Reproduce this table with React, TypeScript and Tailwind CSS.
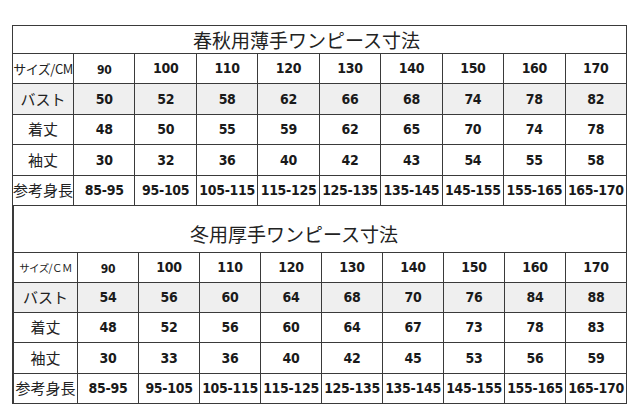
import React from "react";

type Table = {
  title: string;
  titleClass: string;
  sizeLabel: string;
  sizeLabelClass: string;
  labelWidth: string;
  rowHeights: string[];
  rows: { label: string; values: string[]; shaded?: boolean }[];
};

const sizes = ["90", "100", "110", "120", "130", "140", "150", "160", "170"];

const tables: Table[] = [
  {
    title: "春秋用薄手ワンピース寸法",
    titleClass: "h-[28px] pr-[26px] text-[19px] leading-none",
    sizeLabel: "サイズ/CM",
    sizeLabelClass: "text-[13px] tracking-[-0.5px]",
    labelWidth: "grid-cols-[61px_repeat(9,minmax(0,1fr))]",
    rowHeights: ["h-[30px]", "h-[31px]", "h-[30px]", "h-[31px]", "h-[30px]"],
    rows: [
      { label: "バスト", values: ["50", "52", "58", "62", "66", "68", "74", "78", "82"], shaded: true },
      { label: "着丈", values: ["48", "50", "55", "59", "62", "65", "70", "74", "78"] },
      { label: "袖丈", values: ["30", "32", "36", "40", "42", "43", "54", "55", "58"] },
      {
        label: "参考身長",
        values: ["85-95", "95-105", "105-115", "115-125", "125-135", "135-145", "145-155", "155-165", "165-170"],
      },
    ],
  },
  {
    title: "冬用厚手ワンピース寸法",
    titleClass: "h-[47px] pr-[52px] pt-[8px] text-[19px] leading-none",
    sizeLabel: "サイズ/ＣＭ",
    sizeLabelClass: "text-[10.5px] tracking-[-0.6px]",
    labelWidth: "grid-cols-[64px_repeat(9,minmax(0,1fr))]",
    rowHeights: ["h-[30px]", "h-[30px]", "h-[30px]", "h-[31px]", "h-[30px]"],
    rows: [
      { label: "バスト", values: ["54", "56", "60", "64", "68", "70", "76", "84", "88"], shaded: true },
      { label: "着丈", values: ["48", "52", "56", "60", "64", "67", "73", "78", "83"] },
      { label: "袖丈", values: ["30", "33", "36", "40", "42", "45", "53", "56", "59"] },
      {
        label: "参考身長",
        values: ["85-95", "95-105", "105-115", "115-125", "125-135", "135-145", "145-155", "155-165", "165-170"],
      },
    ],
  },
];

const jp = "font-['Noto_Sans_CJK_JP',sans-serif]";
const num = "font-['DejaVu_Sans_Condensed','DejaVu_Sans','Liberation_Sans',sans-serif] font-bold tracking-[-0.3px]";

const SizeTable = ({ table, first }: { table: Table; first: boolean }) => {
  return (
    <div className={`w-[615px] border-l border-[#3a3a3a] ${first ? "border-t" : "border-l-2"}`}>
      <div
        className={`flex items-center justify-center border-r border-b border-[#3a3a3a] text-[#222] ${jp} ${table.titleClass}`}
      >
        {table.title}
      </div>
      <div className={`grid ${table.labelWidth}`}>
        <div
          className={`flex items-center justify-center border-r border-b border-[#3a3a3a] text-[#222] ${jp} ${table.sizeLabelClass} ${table.rowHeights[0]} whitespace-nowrap`}
        >
          {table.sizeLabel}
        </div>
        {sizes.map((s, i) => (
          <div
            key={s}
            className={`flex items-center justify-center border-r border-b border-[#3a3a3a] text-[#1a1a1a] ${num} ${table.rowHeights[0]} ${i === 0 ? "text-[12px] pt-[2px]" : "text-[14px]"}`}
          >
            {s}
          </div>
        ))}
        {table.rows.map((row, r) => (
          <React.Fragment key={row.label}>
            <div
              className={`flex items-center justify-center border-r border-b border-[#3a3a3a] text-[#222] ${jp} text-[15px] ${table.rowHeights[r + 1]} whitespace-nowrap ${row.shaded ? "bg-[#efefef]" : "bg-white"}`}
            >
              {row.label}
            </div>
            {row.values.map((v, i) => (
              <div
                key={i}
                className={`flex items-center justify-center border-r border-b border-[#3a3a3a] text-[#1a1a1a] whitespace-nowrap text-[14px] ${num} ${table.rowHeights[r + 1]} ${row.shaded ? "bg-[#efefef]" : "bg-white"}`}
              >
                {v}
              </div>
            ))}
          </React.Fragment>
        ))}
      </div>
    </div>
  );
}

export default function App() {
  return (
    <div className="w-[640px] h-[406px] bg-white overflow-hidden">
      <div className="pt-[25px] pl-[12px]">
        <SizeTable table={tables[0]} first />
        <SizeTable table={tables[1]} first={false} />
      </div>
    </div>
  );
}
